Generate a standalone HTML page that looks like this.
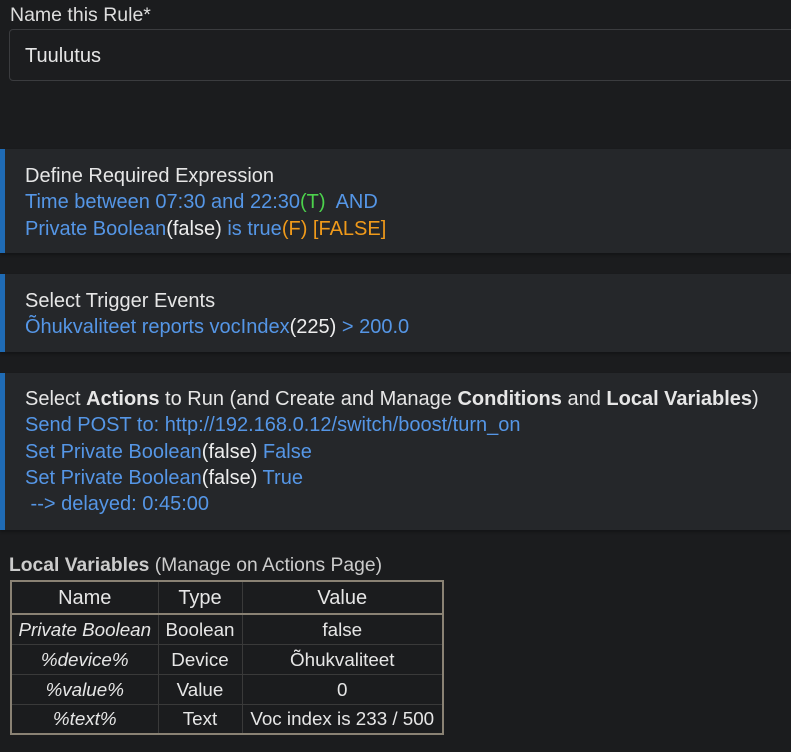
<!DOCTYPE html>
<html><head><meta charset="utf-8"><style>
*{margin:0;padding:0;box-sizing:border-box}
body{width:791px;height:752px;background:#1b1c1e;font-family:"Liberation Sans",sans-serif;color:#e6e6e6;font-size:20px;overflow:hidden;position:relative}
.lbl{position:absolute;left:10px;top:4px;font-size:19.5px;color:#ddd}
.inp{position:absolute;left:9px;top:29px;width:800px;height:52px;border:1px solid #3b3c3f;border-radius:4px;background:#1c1d1f}
.inp span{position:absolute;left:15px;top:15px}
.pn{position:absolute;left:0;width:791px;background:#25272a;border-left:5px solid #1f6bb5;padding-left:20px;box-shadow:0 2px 2px #141517}
.pn div{height:26.3px;line-height:26px;white-space:nowrap}
.b{color:#5596e6}.w{color:#eee}.g{color:#4cd24c}.o{color:#f09a1a}
.lv{position:absolute;left:9px;top:555px;font-size:19.3px;color:#ccc}
table{position:absolute;left:10px;top:580px;border-collapse:collapse;border:2px solid #8a8274;font-size:18.8px;color:#e6e6e6}
td,th{border:1px solid #3a3a3a;text-align:center;height:30px;padding:1px 2px 0;font-weight:normal;white-space:nowrap}
th{height:33px;font-size:20px;border-bottom:2px solid #8a8274}
td.i{font-style:italic}
</style></head><body>
<div class="lbl">Name this Rule*</div>
<div class="inp"><span>Tuulutus</span></div>
<div class="pn" style="top:149px;height:104px;padding-top:14px">
<div>Define Required Expression</div>
<div class="b">Time between 07:30 and 22:30<span class="g">(T)</span>&nbsp; AND</div>
<div class="b">Private Boolean<span class="w">(false)</span> is true<span class="o">(F) [FALSE]</span></div>
</div>
<div class="pn" style="top:274px;height:78px;padding-top:14px">
<div>Select Trigger Events</div>
<div class="b">Õhukvaliteet reports vocIndex<span class="w">(225)</span> &gt; 200.0</div>
</div>
<div class="pn" style="top:373px;height:157px;padding-top:13px">
<div>Select <b>Actions</b> to Run (and Create and Manage <b>Conditions</b> and <b>Local Variables</b>)</div>
<div class="b">Send POST to: http://192.168.0.12/switch/boost/turn_on</div>
<div class="b">Set Private Boolean<span class="w">(false)</span> False</div>
<div class="b">Set Private Boolean<span class="w">(false)</span> True</div>
<div class="b">&nbsp;--&gt; delayed: 0:45:00</div>
</div>
<div class="lv"><b>Local Variables</b> (Manage on Actions Page)</div>
<table>
<tr><th style="width:147px">Name</th><th style="width:84px">Type</th><th style="width:201px">Value</th></tr>
<tr><td class="i">Private Boolean</td><td>Boolean</td><td>false</td></tr>
<tr><td class="i">%device%</td><td>Device</td><td>Õhukvaliteet</td></tr>
<tr><td class="i">%value%</td><td>Value</td><td>0</td></tr>
<tr><td class="i">%text%</td><td>Text</td><td>Voc index is 233 / 500</td></tr>
</table>
</body></html>
